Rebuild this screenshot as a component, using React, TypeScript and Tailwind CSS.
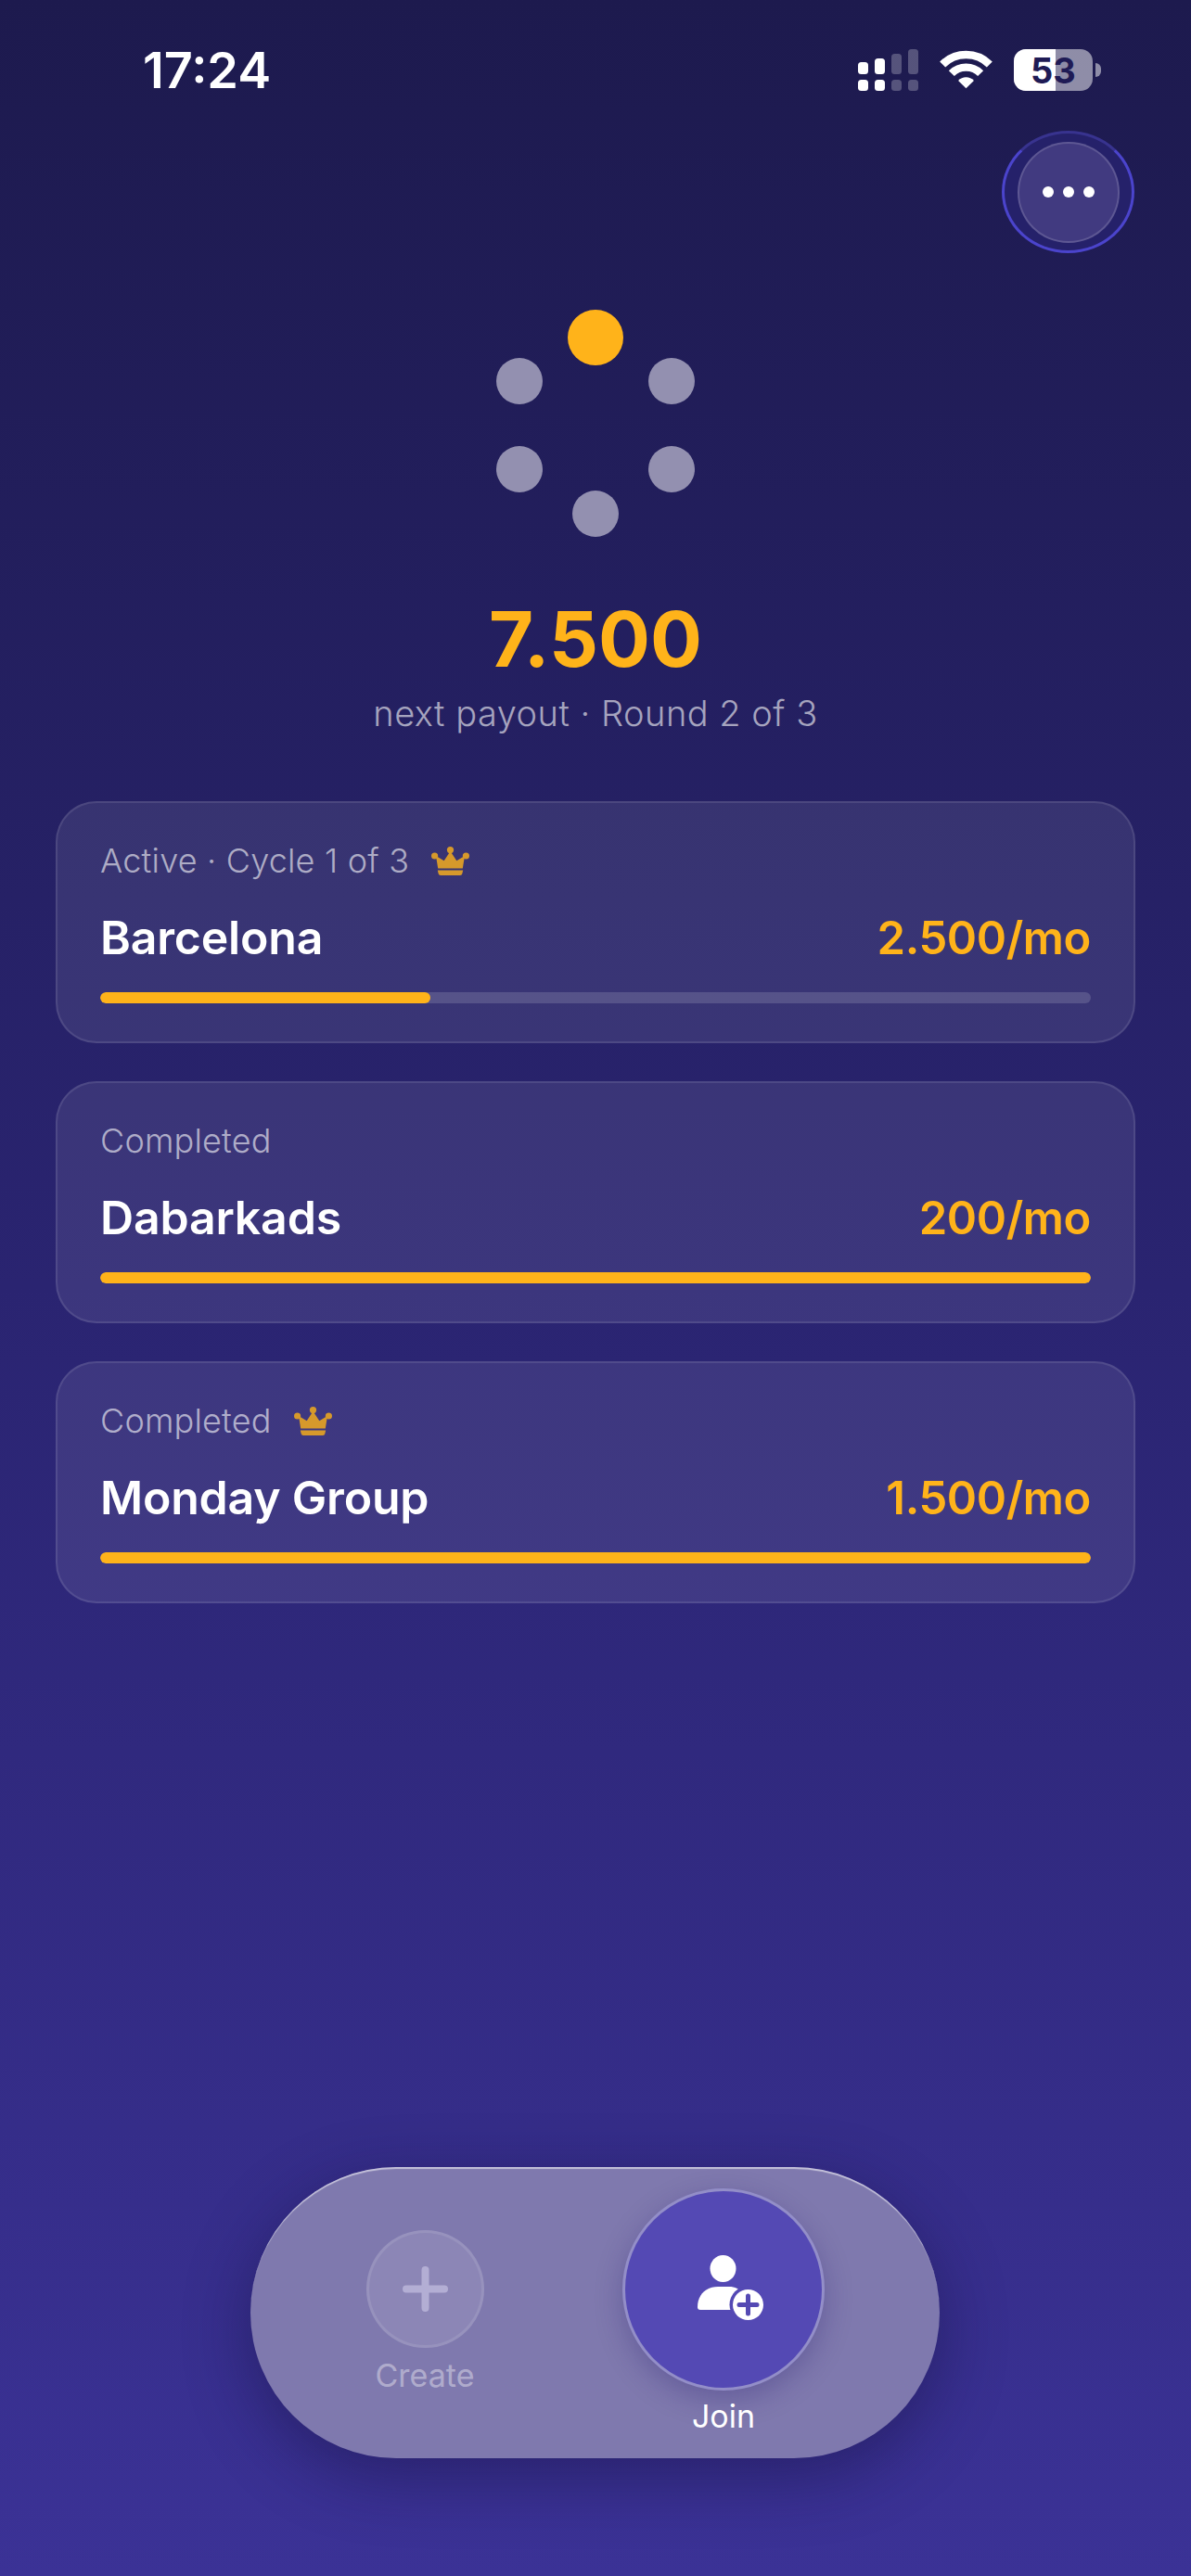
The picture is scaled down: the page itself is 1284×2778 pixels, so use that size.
import React from "react";

function Crown({ className }: { className?: string }) {
  return (
    <svg viewBox="0 0 41 31" className={className} fill="#d6992b">
      <circle cx="20.5" cy="3.6" r="3.6" />
      <circle cx="3.6" cy="10" r="3.6" />
      <circle cx="37.4" cy="10" r="3.6" />
      <path d="M20.5 5 L27.3 15.2 L36 10 L33.8 23.6 L7.2 23.6 L5 10 L13.7 15.2 Z" />
      <path d="M6.8 25.6 H34.2 L33.3 29.2 Q33 31 31 31 H10 Q8 31 7.7 29.2 Z" />
    </svg>
  );
}

function Card({
  label,
  crown,
  title,
  value,
  progress,
}: {
  label: string;
  crown?: boolean;
  title: string;
  value: string;
  progress: number;
}) {
  return (
    <div className="h-[261px] rounded-[44px] border-2 border-white/10 bg-white/[0.085] px-[46px] pt-[37px]">
      <div className="flex h-[50px] items-center gap-[24px] text-[36px] font-light tracking-[0.2px] text-white/60">
        <span>{label}</span>
        {crown && <Crown className="h-[31px] w-[41px]" />}
      </div>
      <div className="mt-[27px] flex h-[62px] items-center justify-between text-[50px] font-semibold leading-none tracking-[-0.2px]">
        <span className="text-white">{title}</span>
        <span className="text-[49px] tracking-[-0.4px] text-[#ffb31a]">{value}</span>
      </div>
      <div className="mt-[28px] h-[12px] overflow-hidden rounded-full bg-white/15">
        <div className="h-full rounded-full bg-[#ffb31a]" style={{ width: `${progress}%` }} />
      </div>
    </div>
  );
}

export default function App() {
  return (
    <div className="flex h-[2778px] w-[1284px] flex-col overflow-hidden bg-linear-to-b from-[#1d1a4e] via-[#2a2471] to-[#3b3296] font-[Inter,sans-serif]">
      {/* status bar */}
      <div className="flex h-[141px] items-start justify-between pl-[154px] pr-[97px] pt-[53px]">
        <span className="text-[54px] font-semibold leading-[46px] text-white">17:24</span>
        <div className="flex items-start">
          <svg viewBox="0 0 65 45" className="h-[45px] w-[65px]">
            <g fill="#fff">
              <rect x="0" y="14" width="11" height="13" rx="3.5" />
              <rect x="18" y="10" width="11" height="17" rx="3.5" />
              <rect x="0" y="33" width="11" height="12" rx="3.5" />
              <rect x="18" y="33" width="11" height="12" rx="3.5" />
            </g>
            <g fill="#fff" fillOpacity="0.25">
              <rect x="36" y="5" width="11" height="22" rx="3.5" />
              <rect x="54" y="0" width="11" height="27" rx="3.5" />
              <rect x="36" y="33" width="11" height="12" rx="3.5" />
              <rect x="54" y="33" width="11" height="12" rx="3.5" />
            </g>
          </svg>
          <svg viewBox="1.5 2.5 54 39.5" className="ml-[23px] mt-[1px] h-[42px] w-[57px]" fill="none" stroke="#fff" strokeWidth="8">
            <path d="M4.5 17 A34 34 0 0 1 52.5 17" />
            <path d="M13.65 26.15 A21 21 0 0 1 43.35 26.15" />
            <path d="M28.5 41.5 L20.5 33.5 A11.3 11.3 0 0 1 36.5 33.5 Z" fill="#fff" stroke="none" />
          </svg>
          <div className="relative ml-[23px] flex h-[45px] w-[85px] items-center justify-center rounded-[13px] bg-white/50">
            <div className="absolute inset-y-0 left-0 w-[45px] rounded-l-[13px] bg-white" />
            <span className="relative text-[38px] font-bold leading-none text-[#1f1b55]">53</span>
          </div>
          <div className="ml-[3px] mt-[15px] h-[15px] w-[6px] rounded-r-full bg-white/50" />
        </div>
      </div>

      {/* menu button */}
      <div className="flex justify-end pr-[61px]">
        <div className="flex h-[132px] w-[143px] items-center justify-center rounded-[50%] border-[3px] border-[#4b44cc] border-t-[#38338f] bg-[#25216a]">
          <div className="flex h-[109px] w-[110px] items-center justify-center gap-[10px] rounded-full border-2 border-white/15 bg-[#413a80]">
            <span className="h-[12px] w-[12px] rounded-full bg-white" />
            <span className="h-[12px] w-[12px] rounded-full bg-white" />
            <span className="h-[12px] w-[12px] rounded-full bg-white" />
          </div>
        </div>
      </div>

      {/* round table */}
      <div className="relative mx-auto mt-[61px] h-[240px] w-[214px]">
        <span className="absolute left-[77px] top-0 h-[60px] w-[60px] rounded-full bg-[#ffb31a]" />
        <span className="absolute left-0 top-[52px] h-[50px] w-[50px] rounded-full bg-[#9390b0]" />
        <span className="absolute right-0 top-[52px] h-[50px] w-[50px] rounded-full bg-[#9390b0]" />
        <span className="absolute left-0 top-[147px] h-[50px] w-[50px] rounded-full bg-[#9390b0]" />
        <span className="absolute right-0 top-[147px] h-[50px] w-[50px] rounded-full bg-[#9390b0]" />
        <span className="absolute left-[82px] top-[195px] h-[50px] w-[50px] rounded-full bg-[#9390b0]" />
      </div>

      {/* amount */}
      <div className="mt-[65px] text-center text-[83px] font-bold leading-[100px] text-[#ffb31a]">7.500</div>
      <div className="mt-[6px] text-center text-[38px] font-light leading-[48px] tracking-[0.5px] text-white/60">
        next payout · Round 2 of 3
      </div>

      {/* cards */}
      <div className="mt-[71px] flex flex-col gap-[41px] px-[60px]">
        <Card label="Active · Cycle 1 of 3" crown title="Barcelona" value="2.500/mo" progress={33.33} />
        <Card label="Completed" title="Dabarkads" value="200/mo" progress={100} />
        <Card label="Completed" crown title="Monday Group" value="1.500/mo" progress={100} />
      </div>

      {/* floating pill */}
      <div className="ml-[270px] mt-[608px] flex h-[314px] w-[743px] items-start rounded-[157px] bg-[#7f79ae] pl-[125px] shadow-[0_20px_70px_rgba(20,15,60,0.45),inset_0_3px_1px_-1px_rgba(255,255,255,0.55)]">
        <div className="mt-[68px] flex w-[126px] flex-col items-center">
          <div className="flex h-[127px] w-[127px] shrink-0 items-center justify-center rounded-full border-[3px] border-white/10 bg-white/10">
            <svg viewBox="0 0 49 49" className="h-[49px] w-[49px]" stroke="#b3aed4" strokeWidth="8" strokeLinecap="round">
              <path d="M24.5 4 V45 M4 24.5 H45" />
            </svg>
          </div>
          <span className="mt-[8px] text-[34px] leading-[44px] text-white/40">Create</span>
        </div>
        <div className="ml-[150px] mt-[23px] flex w-[218px] flex-col items-center">
          <div className="flex h-[218px] w-[218px] shrink-0 items-center justify-center rounded-full border-[3px] border-[#938ec8] bg-[#5449b4] shadow-[0_10px_30px_rgba(40,30,110,0.3)]">
            <svg viewBox="0 0 72 72" className="h-[72px] w-[72px] translate-x-[8px] -translate-y-[1px]">
              <ellipse cx="27.5" cy="14.5" rx="14" ry="14.5" fill="#fff" />
              <path d="M0 56 C0 43 9 34 22 34 H34 C47 34 52 44 52 59 H3 Q0 59 0 56 Z" fill="#fff" />
              <circle cx="54.5" cy="53.5" r="20" fill="#5449b4" />
              <circle cx="54.5" cy="53.5" r="16.5" fill="#fff" />
              <path d="M54.5 44 V63 M45 53.5 H64" stroke="#5449b4" strokeWidth="5" strokeLinecap="round" />
            </svg>
          </div>
          <span className="mt-[6px] text-[34px] leading-[44px] text-white">Join</span>
        </div>
      </div>
    </div>
  );
}
